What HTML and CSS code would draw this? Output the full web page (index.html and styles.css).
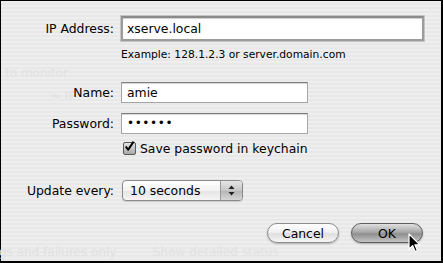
FILE: index.html
```html
<!DOCTYPE html>
<html lang="en">
<head>
  <meta charset="UTF-8">
  <title>Connect to Server</title>
  <link rel="stylesheet" href="styles.css">
</head>
<body>
  <div class="sheet">
    <!-- window showing through the sheet -->
    <div class="behind">
      <span class="ghost g-monitor">to monitor</span>
      <span class="ghost g-ip">≈ IP</span>
      <span class="ghost g-logs">gs and failures only</span>
      <span class="ghost g-status">Show detailed status</span>
    </div>

    <form class="form">
      <div class="row row-ip">
        <label class="lbl">IP Address:</label>
        <div class="field field-wide focus">xserve.local</div>
      </div>
      <div class="row row-hint">
        <span class="lbl"></span>
        <span class="hint">Example: 128.1.2.3 or server.domain.com</span>
      </div>
      <div class="row row-name">
        <label class="lbl">Name:</label>
        <div class="field">amie</div>
      </div>
      <div class="row row-pass">
        <label class="lbl">Password:</label>
        <div class="field dots">&bull;&bull;&bull;&bull;&bull;&bull;</div>
      </div>
      <div class="row row-check">
        <span class="lbl"></span>
        <label class="check">
          <span class="box">
            <svg width="13" height="13" viewBox="0 0 13 13"><path d="M3 6.5 L5.6 10 L11.5 1.2" fill="none" stroke="#000" stroke-width="2.2" stroke-linejoin="round"/></svg>
          </span>
          Save password in keychain
        </label>
      </div>
      <div class="row row-update">
        <label class="lbl">Update every:</label>
        <div class="popup">
          <span class="popup-text">10 seconds</span>
          <span class="arrows">
            <svg width="7" height="11" viewBox="0 0 7 11"><path d="M3.5 0.5 L6.5 4 L0.5 4 Z M3.5 10.5 L6.5 7 L0.5 7 Z" fill="#222"/></svg>
          </span>
        </div>
      </div>
    </form>

    <div class="buttons">
      <button class="btn" type="button">Cancel</button>
      <button class="btn btn-default" type="button">OK</button>
    </div>

    <svg class="cursor" width="13" height="21" viewBox="0 0 13 21">
      <path d="M1 1 L1 16 L4.6 12.6 L7.2 18.6 L9.4 17.6 L6.9 11.8 L11.8 11.8 Z" fill="#000" stroke="#fff" stroke-width="1.2" stroke-linejoin="round"/>
    </svg>
  </div>
</body>
</html>
```

FILE: styles.css
```css
html, body {
  margin: 0;
  padding: 0;
}
body {
  width: 443px;
  height: 263px;
  overflow: hidden;
  font-family: "Lucida Grande", "DejaVu Sans", sans-serif;
  font-size: 12.4px;
  color: #000;
}
.sheet {
  position: relative;
  box-sizing: border-box;
  width: 443px;
  height: 263px;
  border-top: 1px solid #000;
  border-left: 1px solid #000;
  border-right: 2px solid #000;
  border-bottom: 2px solid #000;
  background: repeating-linear-gradient(#eeeeee 0 2px, #e8e8e8 2px 4px);
}
.behind {
  position: absolute;
  inset: 0;
}
.ghost {
  position: absolute;
  color: #e1e1e1;
  font-size: 12px;
  white-space: nowrap;
}
.g-monitor { left: 4px; top: 65px; }
.g-ip { left: 50px; top: 88px; }
.g-logs { left: -2px; top: 244px; }
.g-status { left: 152px; top: 244px; }
.form {
  position: relative;
  padding-top: 15px;
}
.row {
  display: flex;
  align-items: center;
}
.lbl {
  width: 113px;
  margin-right: 7px;
  text-align: right;
  flex: none;
}
.row-ip { height: 25px; }
.row-hint { margin-top: 7px; height: 13px; }
.row-name { margin-top: 21px; height: 21px; }
.row-pass { margin-top: 10px; height: 21px; }
.row-check { margin-top: 6px; height: 16px; }
.row-update { margin-top: 24px; height: 21px; }
.field {
  box-sizing: border-box;
  width: 187px;
  height: 21px;
  padding: 0 5px;
  line-height: 19px;
  background: #fff;
  border: 1px solid #a5a5a5;
  border-top-color: #7d7d7d;
  box-shadow: inset 0 1px 0 #d8d8d8;
}
.field-wide {
  width: 303px;
  height: 25px;
}
.focus {
  border: 2px solid #9c9c9c;
  border-top-color: #8a8a8a;
  line-height: 21px;
  padding-left: 4px;
  box-shadow: inset 0 1px 1px #cfcfcf, 0 0 0 1px #c4c4c4;
}
.dots {
  font-size: 12px;
  letter-spacing: 0.6px;
}
.hint {
  font-size: 10.7px;
}
.check {
  display: flex;
  align-items: center;
  gap: 4px;
}
.box {
  box-sizing: border-box;
  width: 13px;
  height: 13px;
  margin-left: 2px;
  border: 1px solid #5a5a5a;
  border-radius: 2px;
  background: linear-gradient(#e4e4e4, #a8a8a8);
  display: flex;
}
.box svg {
  margin: -3px 0 0 -1px;
}
.popup {
  box-sizing: border-box;
  display: flex;
  width: 121px;
  height: 21px;
  margin-left: 1px;
  border: 1px solid #8a8a8a;
  border-radius: 4px;
  background: linear-gradient(#ffffff, #f2f2f2 50%, #e4e4e4 51%, #f5f5f5);
  overflow: hidden;
  box-shadow: 0 1px 1px rgba(0, 0, 0, 0.15);
}
.popup-text {
  flex: 1;
  padding-left: 7px;
  line-height: 19px;
}
.arrows {
  width: 21px;
  border-left: 1px solid #999;
  background: linear-gradient(#e6e6e6, #c6c6c6 50%, #b4b4b4 51%, #d6d6d6);
  display: flex;
  align-items: center;
  justify-content: center;
}
.buttons {
  position: relative;
  display: flex;
  justify-content: flex-end;
  gap: 12px;
  margin-top: 22px;
  padding-right: 18px;
}
.btn {
  box-sizing: border-box;
  width: 72px;
  height: 20px;
  padding: 0;
  font-family: inherit;
  font-size: 12.4px;
  color: #000;
  border: 1px solid #8c8c8c;
  border-radius: 10px;
  background: linear-gradient(#ffffff, #f1f1f1 45%, #dedede 55%, #f6f6f6);
  box-shadow: 0 1px 2px rgba(0, 0, 0, 0.25);
}
.btn-default {
  border-color: #5f5f5f;
  background: linear-gradient(#e0e0e0, #a8a8a8 45%, #8f8f8f 55%, #c4c4c4);
}
.cursor {
  position: absolute;
  left: 407px;
  top: 232px;
}
```
